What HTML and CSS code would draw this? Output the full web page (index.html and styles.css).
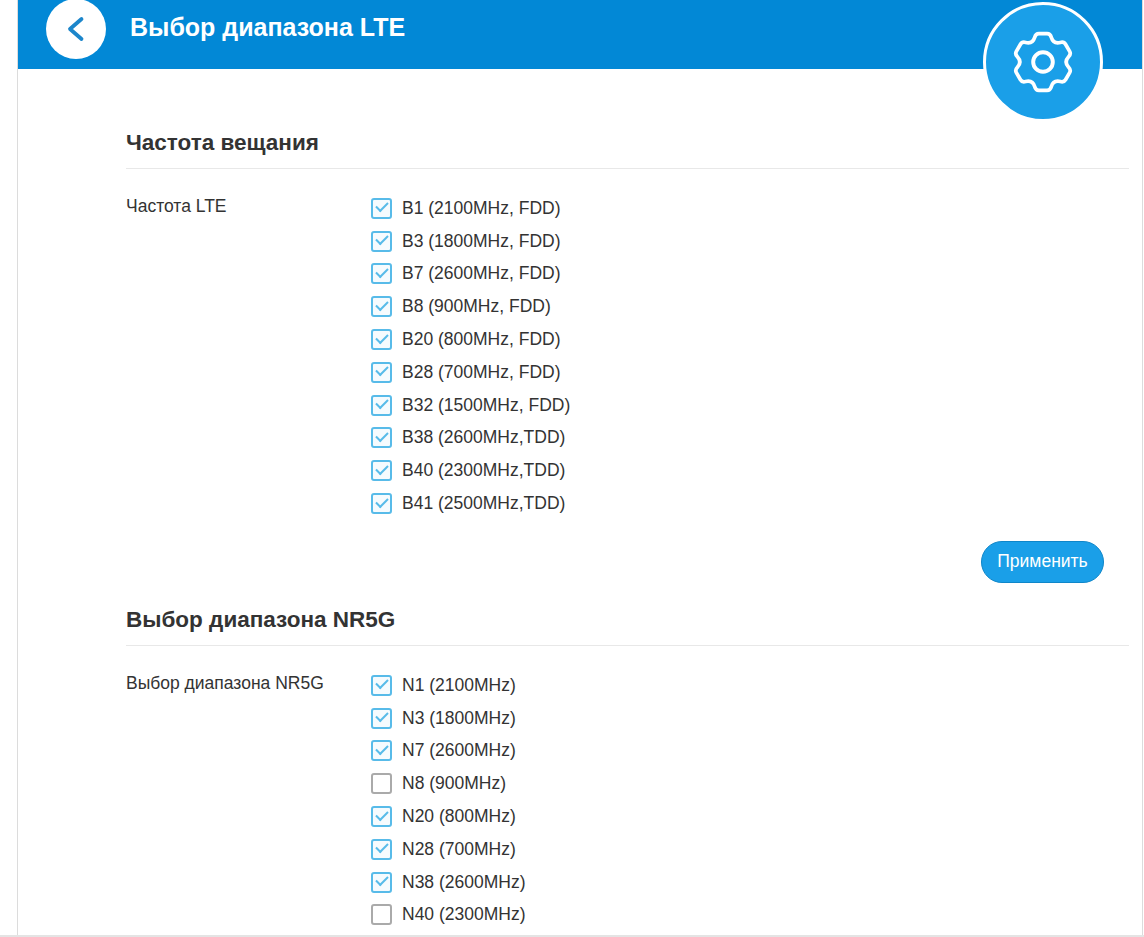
FILE: index.html
```html
<!DOCTYPE html>
<html lang="en">
<head>
    <meta charset="UTF-8">
    <title>Выбор диапазона LTE</title>
    <link rel="stylesheet" href="styles.css">
</head>
<body>
    <div class="page">
        <div class="header">
            <a class="back-btn">
                <svg width="20" height="26" viewBox="0 0 20 26"><path d="M15.5 3 L4 13 L15.5 23" fill="none" stroke="#1c86cb" stroke-width="3.8" stroke-linecap="round" stroke-linejoin="round"/></svg>
            </a>
            <h1>Выбор диапазона LTE</h1>
            <div class="gear-badge">
                <svg width="62" height="62" viewBox="0 0 60 60"><path d="M22 6 Q23 2.5 26 2.5 L34 2.5 Q37 2.5 38 6 Q40 12.7 46.78 11.07 Q50.3 10.19 51.8 12.79 L55.8 19.71 Q57.3 22.31 54.78 24.93 Q50 30 54.78 35.07 Q57.3 37.69 55.8 40.29 L51.8 47.21 Q50.3 49.81 46.78 48.93 Q40 47.3 38 54 Q37 57.5 34 57.5 L26 57.5 Q23 57.5 22 54 Q20 47.3 13.22 48.93 Q9.7 49.81 8.2 47.21 L4.2 40.29 Q2.7 37.69 5.22 35.07 Q10 30 5.22 24.93 Q2.7 22.31 4.2 19.71 L8.2 12.79 Q9.7 10.19 13.22 11.07 Q20 12.7 22 6 Z" fill="none" stroke="#fff" stroke-width="3.6" stroke-linejoin="round"/><circle cx="30" cy="30" r="9.5" fill="none" stroke="#fff" stroke-width="3.8"/></svg>
            </div>
        </div>

        <div class="content">
            <div class="section">
                <h2>Частота вещания</h2>
                <div class="field">
                    <div class="field-label">Частота LTE</div>
                    <div class="options">
                        <label class="option"><span class="box checked"></span>B1 (2100MHz, FDD)</label>
                        <label class="option"><span class="box checked"></span>B3 (1800MHz, FDD)</label>
                        <label class="option"><span class="box checked"></span>B7 (2600MHz, FDD)</label>
                        <label class="option"><span class="box checked"></span>B8 (900MHz, FDD)</label>
                        <label class="option"><span class="box checked"></span>B20 (800MHz, FDD)</label>
                        <label class="option"><span class="box checked"></span>B28 (700MHz, FDD)</label>
                        <label class="option"><span class="box checked"></span>B32 (1500MHz, FDD)</label>
                        <label class="option"><span class="box checked"></span>B38 (2600MHz,TDD)</label>
                        <label class="option"><span class="box checked"></span>B40 (2300MHz,TDD)</label>
                        <label class="option"><span class="box checked"></span>B41 (2500MHz,TDD)</label>
                    </div>
                </div>
                <div class="actions">
                    <button class="apply-btn">Применить</button>
                </div>
            </div>

            <div class="section section-nr">
                <h2>Выбор диапазона NR5G</h2>
                <div class="field">
                    <div class="field-label">Выбор диапазона NR5G</div>
                    <div class="options">
                        <label class="option"><span class="box checked"></span>N1 (2100MHz)</label>
                        <label class="option"><span class="box checked"></span>N3 (1800MHz)</label>
                        <label class="option"><span class="box checked"></span>N7 (2600MHz)</label>
                        <label class="option"><span class="box"></span>N8 (900MHz)</label>
                        <label class="option"><span class="box checked"></span>N20 (800MHz)</label>
                        <label class="option"><span class="box checked"></span>N28 (700MHz)</label>
                        <label class="option"><span class="box checked"></span>N38 (2600MHz)</label>
                        <label class="option"><span class="box"></span>N40 (2300MHz)</label>
                    </div>
                </div>
            </div>
        </div>
    </div>
    <div class="bottom-line"></div>
</body>
</html>
```

FILE: styles.css
```css
html, body { margin: 0; padding: 0; height: 937px; overflow: hidden; background-color: #fff; }
body { font-family: "Liberation Sans", Arial, sans-serif; color: #333; }

.page { height: 935px; margin: 0 1px 0 17px; border-left: 1px solid #dcdcdc; border-right: 1px solid #dcdcdc; overflow: hidden; }
.bottom-line { height: 2px; background-color: #e4e4e4; }

.header { position: relative; height: 69px; background-color: #0288d6; display: flex; align-items: flex-start; padding-left: 28px; }
.header h1 { margin: 11px 0 0 24px; font-size: 25px; line-height: 32px; font-weight: bold; color: #fff; }
.back-btn { width: 60px; height: 60px; margin-top: -1px; border-radius: 50%; background-color: #fff; display: flex; align-items: center; justify-content: center; flex-shrink: 0; }
.gear-badge { position: absolute; left: 965px; top: 2px; width: 114px; height: 114px; border: 3px solid #fff; border-radius: 50%; background-color: #1a9fe8; display: flex; align-items: center; justify-content: center; }

.content { padding: 55px 13px 0 108px; }
.section h2 { margin: 0; padding-bottom: 7px; height: 37px; font-size: 22.5px; line-height: 37px; font-weight: bold; color: #333; border-bottom: 1px solid #e8e8e8; }
.section-nr { margin-top: 18px; }

.field { display: flex; padding-top: 23px; }
.field-label { width: 245px; font-size: 17.5px; line-height: 28px; flex-shrink: 0; }
.options { display: flex; flex-direction: column; }
.option { display: flex; align-items: center; height: 32.8px; font-size: 17.5px; color: #333; }

.box { width: 21px; height: 21px; margin-right: 10px; border: 2px solid #aaa; border-radius: 3px; box-sizing: border-box; background-color: #fff; position: relative; }
.box.checked { border-color: #58bbe9; background-color: #f6fbfe; }
.box.checked::after { content: ""; position: absolute; left: 2.5px; top: 2.5px; width: 10px; height: 5px; border-left: 2.4px solid #58bbe9; border-bottom: 2.4px solid #58bbe9; transform: rotate(-45deg); }

.actions { display: flex; justify-content: flex-end; padding: 21px 25px 0 0; }
.apply-btn { width: 123px; height: 42px; border: 1px solid #0f86c9; border-radius: 21px; background-color: #1a9fe8; color: #fff; font-family: inherit; font-size: 17.5px; padding: 0; }
```
